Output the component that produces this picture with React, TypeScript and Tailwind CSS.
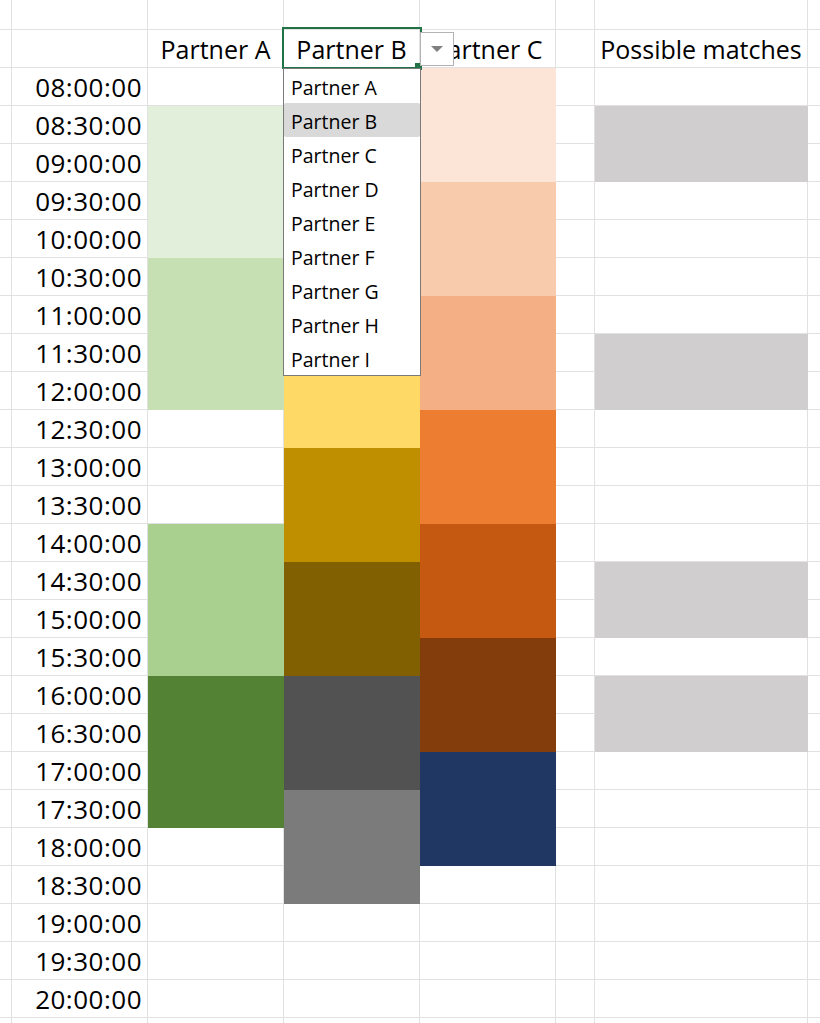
import React from "react";

type Seg = { n: number; fill?: string };

const H: Record<number, string> = {
  1: "h-[38px]",
  2: "h-[76px]",
  3: "h-[114px]",
  4: "h-[152px]",
};

const LG1 = "bg-[#e2efda] border-[#e2efda]";
const LG2 = "bg-[#c6e0b4] border-[#c6e0b4]";
const LG3 = "bg-[#a9d08e] border-[#a9d08e]";
const DG = "bg-[#548235] border-[#548235]";
const Y1 = "bg-[#ffd966] border-[#ffd966]";
const Y2 = "bg-[#bf8f00] border-[#bf8f00]";
const Y3 = "bg-[#806000] border-[#806000]";
const G1 = "bg-[#525252] border-[#525252]";
const G2 = "bg-[#7b7b7b] border-[#7b7b7b]";
const O1 = "bg-[#fce4d6] border-[#fce4d6]";
const O2 = "bg-[#f8cbad] border-[#f8cbad]";
const O3 = "bg-[#f4b084] border-[#f4b084]";
const O4 = "bg-[#ed7d31] border-[#ed7d31]";
const O5 = "bg-[#c65911] border-[#c65911]";
const O6 = "bg-[#833c0b] border-[#833c0b]";
const NV = "bg-[#203764] border-[#203764]";
const PM = "bg-[#d0cece] border-[#d0cece]";

const e = (k: number): Seg[] => Array.from({ length: k }, () => ({ n: 1 }));

const partnerA: Seg[] = [
  ...e(1),
  { n: 4, fill: LG1 },
  { n: 4, fill: LG2 },
  ...e(3),
  { n: 4, fill: LG3 },
  { n: 4, fill: DG },
  ...e(6),
];

const partnerB: Seg[] = [
  ...e(7),
  { n: 3, fill: Y1 },
  { n: 3, fill: Y2 },
  { n: 3, fill: Y3 },
  { n: 3, fill: G1 },
  { n: 3, fill: G2 },
  ...e(4),
];

const partnerC: Seg[] = [
  { n: 3, fill: O1 },
  { n: 3, fill: O2 },
  { n: 3, fill: O3 },
  { n: 3, fill: O4 },
  { n: 3, fill: O5 },
  { n: 3, fill: O6 },
  { n: 3, fill: NV },
  ...e(5),
];

const matches: Seg[] = [
  ...e(1),
  { n: 2, fill: PM },
  ...e(4),
  { n: 2, fill: PM },
  ...e(4),
  { n: 2, fill: PM },
  ...e(1),
  { n: 2, fill: PM },
  ...e(8),
];

const plain: Seg[] = e(26);

const times: string[] = [];
for (let i = 0; i < 25; i++) {
  const h = 8 + Math.floor(i / 2);
  const m = i % 2 === 0 ? "00" : "30";
  times.push(`${h.toString().padStart(2, "0")}:${m}:00`);
}

const GRID = "border-[#e1e1e1]";

function Column({
  width,
  header,
  segs,
  last,
  texts,
}: {
  width: string;
  header?: string;
  segs: Seg[];
  last?: boolean;
  texts?: string[];
}) {
  const br = last ? "" : "border-r";
  return (
    <div className={`${width} flex flex-col shrink-0`}>
      <div className={`h-[30px] shrink-0 border-b ${br} ${GRID}`} />
      <div
        className={`h-[38px] shrink-0 border-b ${br} ${GRID} flex items-center justify-center whitespace-nowrap text-[25px] leading-[36px]`}
      >
        {header}
      </div>
      {segs.map((s, i) => (
        <div
          key={i}
          className={`${H[s.n]} shrink-0 border-b ${br} ${s.fill ?? GRID} flex items-center justify-end pr-[5px] text-[26px] tracking-[0.5px] leading-[36px]`}
        >
          {texts ? texts[i] : null}
        </div>
      ))}
    </div>
  );
}

const items = [
  "Partner A",
  "Partner B",
  "Partner C",
  "Partner D",
  "Partner E",
  "Partner F",
  "Partner G",
  "Partner H",
  "Partner I",
];

export default function App() {
  return (
    <div
      className="relative w-[820px] h-[1023px] overflow-hidden bg-white text-black"
      style={{ fontFamily: '"Open Sans", "Noto Sans", sans-serif' }}
    >
      <div className="flex">
        <Column width="w-[12px]" segs={plain} />
        <Column width="w-[136px]" segs={plain} texts={times} />
        <Column width="w-[136px]" header="Partner A" segs={partnerA} />
        <Column width="w-[136px]" header="Partner B" segs={partnerB} />
        <Column width="w-[136px]" header="Partner C" segs={partnerC} />
        <Column width="w-[39px]" segs={plain} />
        <Column width="w-[213px]" header="Possible matches" segs={matches} />
        <div className="flex-1">
          <Column width="w-full" segs={plain} last />
        </div>
      </div>

      {/* selected cell */}
      <div className="absolute left-[282px] top-[27px] w-[140px] h-[42px] border-2 border-[#217346]" />
      <div className="absolute left-[415px] top-[63px] w-[7px] h-[7px] bg-[#217346]" />

      {/* dropdown button */}
      <div className="absolute left-[420px] top-[32px] w-[34px] h-[34px] bg-white border border-[#b3b3b3] flex items-center justify-center">
        <svg width="12" height="6" viewBox="0 0 12 6">
          <polygon points="0,0 12,0 6,6" fill="#7f7f7f" />
        </svg>
      </div>

      {/* dropdown list */}
      <div className="absolute left-[283px] top-[68px] w-[138px] bg-white border border-[#7a7a7a] flex flex-col">
        {items.map((t, i) => (
          <div
            key={t}
            className={`h-[34px] flex items-center pl-[7px] pt-[3px] text-[19.5px] leading-[26px] ${
              i === 1 ? "bg-[#d9d9d9] rounded-[2px]" : ""
            }`}
          >
            {t}
          </div>
        ))}
      </div>
    </div>
  );
}
